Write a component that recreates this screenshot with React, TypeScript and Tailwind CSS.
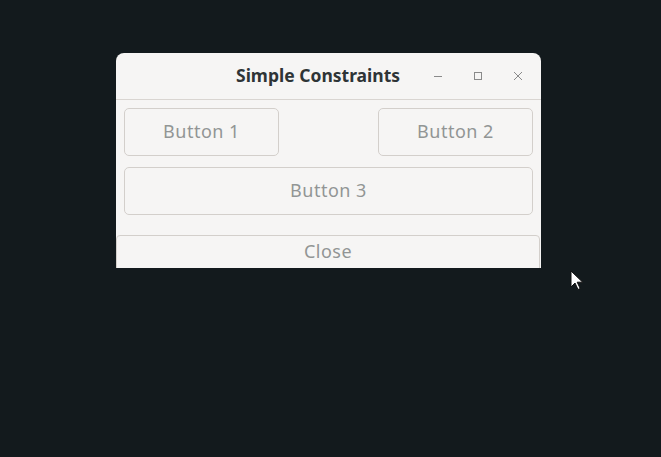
export default function App() {
  return (
    <div className="relative w-full h-[457px] bg-[#131a1d] overflow-hidden" style={{ fontFamily: '"Noto Sans", "Open Sans", sans-serif' }}>
      {/* window */}
      <div className="absolute left-[116px] top-[53px] w-[425px] h-[215px] bg-[#f6f5f4] rounded-t-[8px] overflow-hidden">
        <div className="h-[47px] border-b border-[#d9d5d1] flex items-center pl-[120px] pr-[11px]">
          <span className="text-[17.5px] font-bold text-[#2e3436] pb-[2px]">Simple Constraints</span>
          <div className="ml-auto flex items-center gap-[16px]">
            <div className="w-[24px] h-[24px] flex items-center justify-center">
              <svg width="10" height="10" viewBox="0 0 10 10"><path d="M1 5.5h8" stroke="#8a8a8a" strokeWidth="1" /></svg>
            </div>
            <div className="w-[24px] h-[24px] flex items-center justify-center">
              <svg width="10" height="10" viewBox="0 0 10 10"><rect x="1.5" y="1.5" width="7" height="7" fill="none" stroke="#8a8a8a" strokeWidth="1" /></svg>
            </div>
            <div className="w-[24px] h-[24px] flex items-center justify-center">
              <svg width="10" height="10" viewBox="0 0 10 10"><path d="M1 1l8 8M9 1l-8 8" stroke="#8a8a8a" strokeWidth="1" /></svg>
            </div>
          </div>
        </div>
        <div className="px-[8px] pt-[8px]">
          <div className="flex justify-between">
            <button className="w-[155px] h-[48px] pb-[2px] border border-[#d3cfcb] rounded-[5px] text-[18px] tracking-[0.5px] text-[#929595]">Button 1</button>
            <button className="w-[155px] h-[48px] pb-[2px] border border-[#d3cfcb] rounded-[5px] text-[18px] tracking-[0.5px] text-[#929595]">Button 2</button>
          </div>
          <button className="mt-[11px] w-full h-[48px] pb-[2px] border border-[#d3cfcb] rounded-[5px] text-[18px] tracking-[0.5px] text-[#929595]">Button 3</button>
        </div>
        <button className="mt-[20px] w-[424px] h-[40px] border border-[#d3cfcb] rounded-t-[4px] text-[18px] tracking-[0.5px] text-[#929595] flex justify-center pt-[2px]">Close</button>
      </div>
      {/* cursor */}
      <svg className="absolute left-[570px] top-[270px]" width="14" height="21" viewBox="0 0 14 21">
        <path d="M1 1v16l4-4 3 6.5 2.2-1-3-6.3h5.5z" fill="#ffffff" stroke="#111" strokeWidth="1" strokeLinejoin="round" />
      </svg>
    </div>
  );
}
